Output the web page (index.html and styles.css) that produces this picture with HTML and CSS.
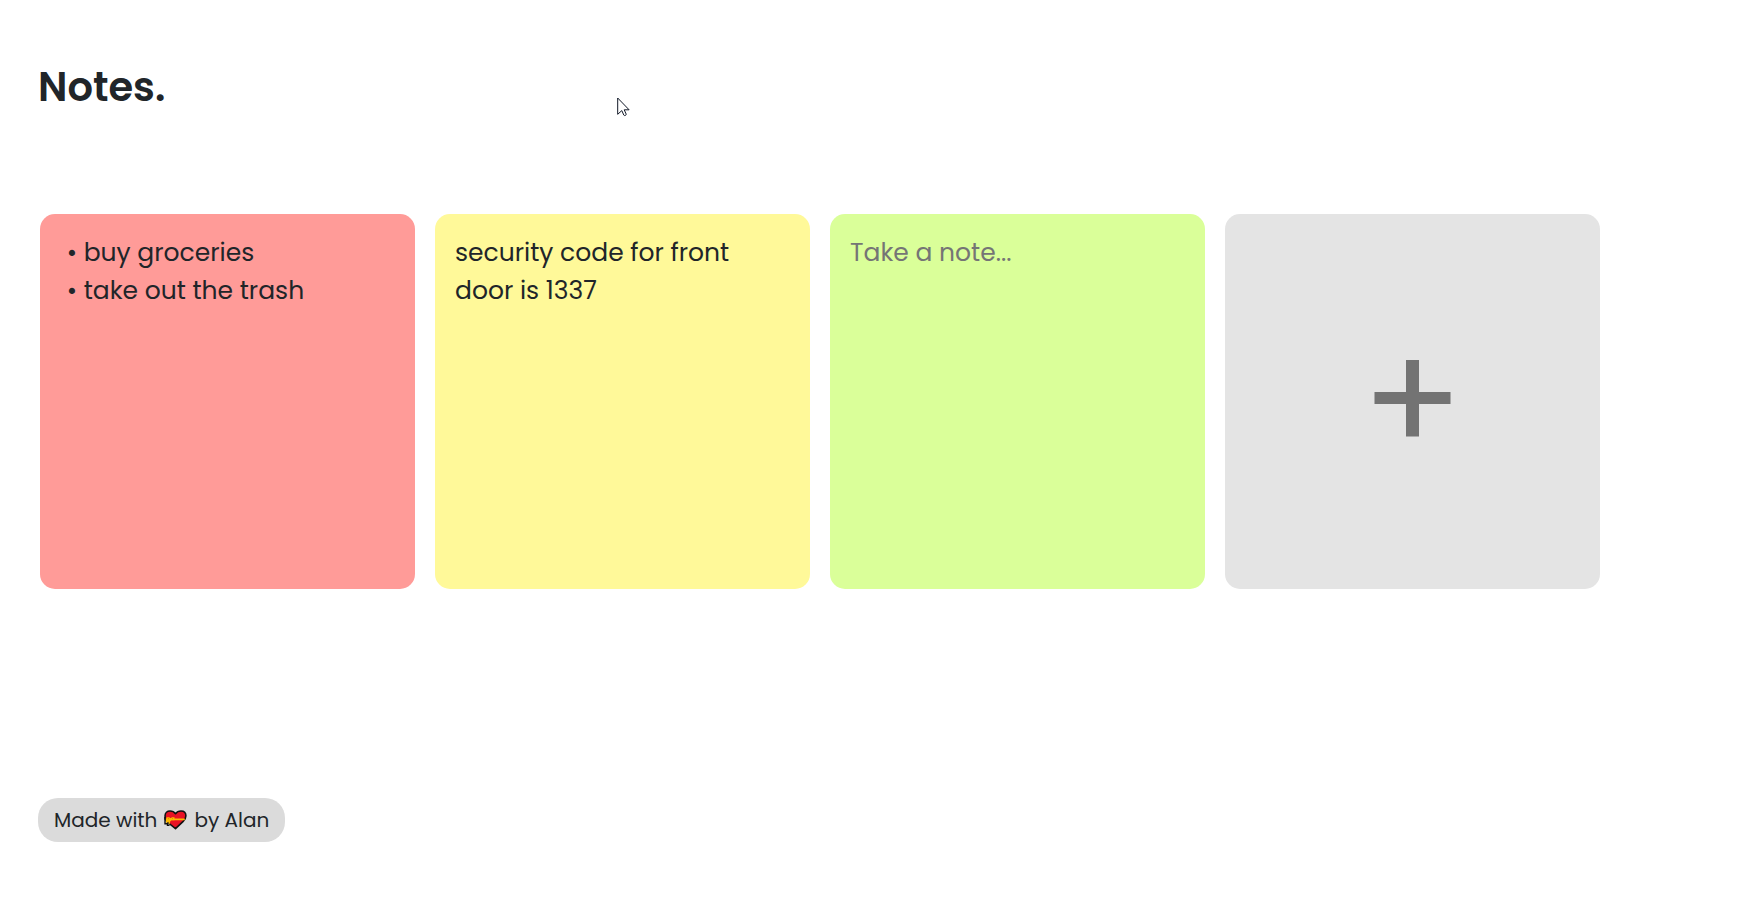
FILE: index.html
```html
<!DOCTYPE html>
<html lang="en">
<head>
<meta charset="utf-8">
<meta name="viewport" content="width=device-width, initial-scale=1">
<title>Notes</title>
<link rel="stylesheet" href="styles.css">
</head>
<body>
<header class="header">
  <h1 class="title">Notes.</h1>
</header>
<main class="notes">
  <textarea class="note note-red" aria-label="Note 1" placeholder="Take a note..." spellcheck="false"> • buy groceries
 • take out the trash</textarea>
  <textarea class="note note-yellow" aria-label="Note 2" placeholder="Take a note..." spellcheck="false">security code for front door is 1337</textarea>
  <textarea class="note note-green" aria-label="Note 3" placeholder="Take a note..." spellcheck="false"></textarea>
  <button class="note add" type="button" aria-label="Add note">
    <svg class="plus" viewBox="0 0 77 77" aria-hidden="true"><path d="M32 0h13v32h31.500v12H45v32.500H32V44H.5V32H32z" fill="#737373"/></svg>
  </button>
</main>
<footer class="footer">
  <a class="credit" href="#">
    <span>Made with</span>
    <svg class="heart" viewBox="0 0 23 20" role="img" aria-label="love">
      <path d="M11.500 18.700 4.500 13 1.100 9V5.500C1.100 2.800 3.200 1 6 1c2.200 0 4.200.9 5.500 2.700C12.800 1.900 14.700 1 17 1c2.900 0 4.900 1.900 4.900 4.800 0 2.300-.9 3.900-2.700 5.500z" fill="#e81224" stroke="#111" stroke-width="1.600" stroke-linejoin="round"/>
      <path d="M1.500 8.500h19.300v1.700H7.500l-1.500 1.600v1.900H4.500v-1.900l-2.300 1.200z" fill="#fcb900"/>
      <path d="M2.500 7.300h2.700l1.300 1L8 7.300h2.500v2.900H7.700l-1.200-.7-1.600 1H2.500z" fill="#fcb900"/>
      <path d="M4 8.600h1M8 8.600h1" stroke="#d67500" stroke-width=".7"/>
      <path d="M1 7v6.700h2.500v1.500h2" fill="none" stroke="#111" stroke-width="1.400"/>
    </svg>
    <span>by Alan</span>
  </a>
</footer>
<svg class="cursor" viewBox="0 0 13 20" aria-hidden="true"><path d="M.7 1v16.300l4.100-3.700 2 4.500c.5 1 2.800.2 2.400-1l-2-4.300h4.900z" fill="#fff" stroke="#111827" stroke-width="1"/></svg>
</body>
</html>
```
FILE: styles.css
```css
* {
  box-sizing: border-box;
}

body {
  margin: 0;
  min-height: 100vh;
  padding: 56px 38px 58px;
  display: flex;
  flex-direction: column;
  background: #fff;
  color: #212529;
  font-family: Poppins, Inter, "Open Sans", sans-serif;
  font-weight: 400;
}

.title {
  margin: 0;
  font-size: 40px;
  line-height: 62px;
  font-weight: 600;
}

.notes {
  display: flex;
  flex-wrap: wrap;
  gap: 20px;
  margin-top: 96px;
  padding: 0 2px;
}

.note {
  width: 375px;
  height: 375px;
  padding: 20px;
  border: 0;
  border-radius: 15px;
  outline: 0;
  resize: none;
  overflow: hidden;
  color: inherit;
  font: inherit;
  font-size: 25px;
  line-height: 38px;
}

.note::placeholder {
  color: #757575;
  opacity: 1;
}

.note-red {
  background: #ff9b98;
}

.note-yellow {
  background: #fff999;
}

.note-green {
  background: #daff99;
}

.add {
  display: flex;
  align-items: center;
  justify-content: center;
  background: #e4e4e4;
  cursor: pointer;
}

.plus {
  width: 77px;
  height: 77px;
  margin-bottom: 6px;
}

.footer {
  display: flex;
  margin-top: auto;
}

.credit {
  display: flex;
  align-items: center;
  gap: 7px;
  padding: 0 16px;
  border-radius: 20px;
  background: #dbdbdb;
  color: inherit;
  font-size: 20px;
  line-height: 44px;
  text-decoration: none;
}

.heart {
  width: 23px;
  height: 20px;
}

.cursor {
  position: absolute;
  left: 617px;
  top: 97px;
  width: 13px;
  height: 20px;
  pointer-events: none;
}
```
